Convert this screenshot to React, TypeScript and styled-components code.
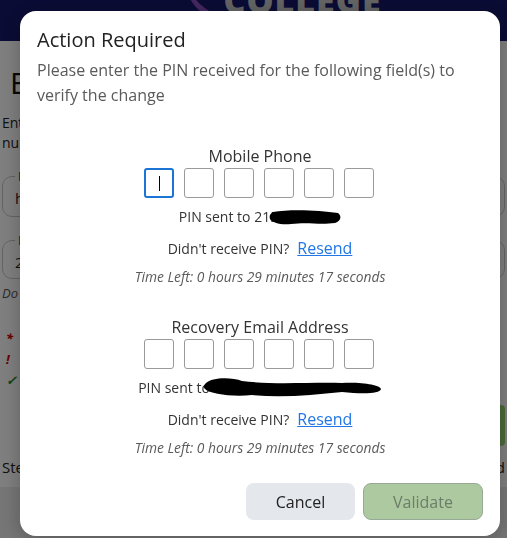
import React from "react";
import styled, { createGlobalStyle } from "styled-components";

const Global = createGlobalStyle`
  * { box-sizing: border-box; }
  html, body { margin: 0; padding: 0; background: #ffffff; }
  body { font-family: "Open Sans", "Noto Sans", Arial, sans-serif; overflow: hidden; }
`;

/* ---------- page behind the dialog ---------- */
const Page = styled.div`
  width: 507px;
  height: 538px;
  display: flex;
  flex-direction: column;
  background: #ffffff;
  overflow: hidden;
`;

const Header = styled.header`
  height: 41px;
  flex: none;
  background: #16186a;
  display: flex;
  justify-content: center;
  align-items: flex-start;
  overflow: hidden;
`;

const Logo = styled.div`
  display: flex;
  align-items: flex-end;
  gap: 8px;
  margin-top: -17px;
  margin-left: 60px;
`;

const LogoText = styled.span`
  font-family: "Open Sans", Arial, sans-serif;
  font-weight: 800;
  font-size: 34px;
  line-height: 34px;
  letter-spacing: 1px;
  color: #c8c8c8;
`;

const Main = styled.main`
  flex: 1;
  display: flex;
  flex-direction: column;
  padding: 0 2px;
  color: #222;
`;

const PageTitle = styled.h1`
  margin: 22px 0 0 8px;
  font-weight: 400;
  font-size: 30px;
  line-height: 40px;
  white-space: nowrap;
  color: #111;
`;

const Intro = styled.p`
  margin: 10px 0 0;
  font-size: 14px;
  line-height: 20px;
  color: #222;
`;

const Field = styled.fieldset<{ h: number }>`
  margin: 14px 0 0;
  padding: 0 12px 8px;
  border: 1px solid #c8c8c8;
  border-radius: 10px;
  height: ${(p) => p.h}px;
  legend { font-size: 13px; padding: 0 3px; color: #333; }
`;

const FieldValue = styled.div`
  font-size: 15px;
  line-height: 22px;
  color: #222;
  margin-top: 2px;
`;

const Hint = styled.div`
  font-size: 13px;
  font-style: italic;
  color: #555;
  margin-top: 5px;
`;

const LegendList = styled.ul`
  list-style: none;
  margin: 26px 0 0;
  padding: 0 0 0 4px;
  font-size: 13px;
  font-style: italic;
  line-height: 21px;
  color: #555;
`;

const Mark = styled.span<{ c: string }>`
  color: ${(p) => p.c};
  font-weight: 700;
  margin-right: 8px;
  display: inline-block;
  width: 12px;
`;

const ActionRow = styled.div`
  display: flex;
  justify-content: flex-end;
  margin-top: 14px;
`;

const NextButton = styled.div`
  width: 120px;
  height: 41px;
  border-radius: 4px;
  background: #94d476;
`;

const StepRow = styled.div`
  display: flex;
  justify-content: space-between;
  font-size: 15px;
  line-height: 22px;
  margin-top: 10px;
`;

const Footer = styled.footer`
  height: 51px;
  flex: none;
  background: #ececec;
`;

/* ---------- dialog ---------- */
const Overlay = styled.div`
  position: fixed;
  inset: 0;
  background: rgba(0, 0, 0, 0.5);
`;

const Dialog = styled.div`
  position: fixed;
  top: 11px;
  left: 20px;
  width: 480px;
  height: 525px;
  background: #ffffff;
  border-radius: 16px;
  padding: 14px 17px 16px;
  display: flex;
  flex-direction: column;
  box-shadow: 0 4px 20px rgba(0, 0, 0, 0.25);
`;

const Title = styled.h2`
  margin: 0;
  font-weight: 400;
  font-size: 20px;
  line-height: 30px;
  color: #222;
`;

const Description = styled.p`
  margin: 3px 0 0;
  font-size: 16px;
  line-height: 25px;
  color: #5a5a5a;
`;

const Section = styled.section<{ first?: boolean }>`
  margin-top: ${(p) => (p.first ? 37 : 30)}px;
  display: flex;
  flex-direction: column;
  align-items: center;
`;

const FieldName = styled.div`
  font-size: 16px;
  line-height: 22px;
  color: #333;
`;

const PinRow = styled.div`
  margin-top: 1px;
  margin-left: -2px;
  display: flex;
  gap: 10px;
`;

const PinBox = styled.div<{ focused?: boolean }>`
  width: 30px;
  height: 30px;
  border-radius: 3px;
  border: ${(p) => (p.focused ? "2px solid #1c74d4" : "1px solid #9a9a9a")};
  display: flex;
  align-items: center;
  justify-content: center;
`;

const Caret = styled.span`
  width: 1px;
  height: 15px;
  background: #000;
`;

const SentLine = styled.div`
  margin-top: 9px;
  height: 20px;
  display: flex;
  align-items: center;
  font-size: 14px;
  line-height: 20px;
  color: #333;
  svg { display: block; flex: none; }
`;

const ResendLine = styled.div`
  margin-top: 10px;
  font-size: 14px;
  line-height: 22px;
  color: #333;
`;

const ResendLink = styled.a`
  margin-left: 8px;
  font-size: 16px;
  color: #2277e6;
  text-decoration: underline;
  cursor: pointer;
`;

const TimeLeft = styled.div`
  margin-top: 8px;
  font-size: 13.8px;
  line-height: 18px;
  font-style: italic;
  color: #5a5a5a;
`;

const Buttons = styled.div`
  margin-top: auto;
  display: flex;
  justify-content: flex-end;
  gap: 8px;
`;

const Button = styled.button<{ variant: "cancel" | "validate" }>`
  height: 37px;
  width: ${(p) => (p.variant === "cancel" ? 109 : 120)}px;
  border-radius: 8px;
  font-family: "Open Sans", Arial, sans-serif;
  font-size: 16px;
  cursor: pointer;
  background: ${(p) => (p.variant === "cancel" ? "#e4e7eb" : "#adc99f")};
  border: ${(p) => (p.variant === "cancel" ? "none" : "1px solid #98a897")};
  color: ${(p) => (p.variant === "cancel" ? "#222" : "#6c7d6a")};
`;

const Redaction = ({ w, h, d, ml }: { w: number; h: number; d: string; ml: number }) => (
  <svg width={w} height={h} viewBox={`0 0 ${w} ${h}`} style={{ marginLeft: ml }}>
    <path d={d} fill="#000" />
  </svg>
);

const PinSection = ({
  name,
  first,
  sent,
}: {
  name: string;
  first?: boolean;
  sent: React.ReactNode;
}) => (
  <Section first={first}>
    <FieldName>{name}</FieldName>
    <PinRow>
      {Array.from({ length: 6 }).map((_, i) => (
        <PinBox key={i} focused={first && i === 0}>
          {first && i === 0 ? <Caret /> : null}
        </PinBox>
      ))}
    </PinRow>
    <SentLine>{sent}</SentLine>
    <ResendLine>
      Didn't receive PIN?<ResendLink>Resend</ResendLink>
    </ResendLine>
    <TimeLeft>Time Left: 0 hours 29 minutes 17 seconds</TimeLeft>
  </Section>
);

export default function App() {
  return (
    <>
      <Global />
      <Page>
        <Header>
          <Logo>
            <svg width="30" height="34" viewBox="0 0 30 34">
              <path d="M2 0 C6 14, 16 24, 28 30 L24 34 C12 28, 2 16, 0 0 Z" fill="#8a4fc0" />
            </svg>
            <LogoText>COLLEGE</LogoText>
          </Logo>
        </Header>
        <Main>
          <PageTitle>Edit Contact Information</PageTitle>
          <Intro>
            Enter your new contact details below and confirm your phone
            <br />
            number and recovery email address
          </Intro>
          <Field h={50}>
            <legend>Personal Email</legend>
            <FieldValue>hidden@example.edu</FieldValue>
          </Field>
          <Field h={48}>
            <legend>Mobile Phone</legend>
            <FieldValue>215 000 0000</FieldValue>
          </Field>
          <Hint>Do not include country code</Hint>
          <LegendList>
            <li>
              <Mark c="#c00">*</Mark>Required field
            </li>
            <li>
              <Mark c="#c00">!</Mark>Verification needed
            </li>
            <li>
              <Mark c="#2a8a2a">✓</Mark>Verified
            </li>
          </LegendList>
          <ActionRow>
            <NextButton />
          </ActionRow>
          <StepRow>
            <span>Step 2 of 3</span>
            <span>Saved</span>
          </StepRow>
        </Main>
        <Footer />
      </Page>
      <Overlay />
      <Dialog role="dialog" aria-modal="true">
        <Title>Action Required</Title>
        <Description>
          Please enter the PIN received for the following field(s) to verify the change
        </Description>
        <PinSection
          name="Mobile Phone"
          first
          sent={
            <>
              <span>PIN sent to 215</span>
              <Redaction
                w={72}
                h={16}
                ml={-9}
                d="M4 3 C20 0, 50 1, 69 4 C73 7, 72 12, 66 14 C50 16, 40 13, 22 15 C12 16, 3 14, 1 10 C0 7, 1 5, 4 3 Z"
              />
            </>
          }
        />
        <PinSection
          name="Recovery Email Address"
          sent={
            <>
              <span>PIN sent to</span>
              <Redaction
                w={180}
                h={22}
                ml={-8}
                d="M4 6 C10 0, 30 0, 40 4 C70 8, 110 5, 140 6 C160 5, 178 8, 179 12 C178 17, 160 17, 140 15 C110 18, 80 21, 50 18 C30 20, 8 17, 3 12 C1 10, 2 8, 4 6 Z"
              />
            </>
          }
        />
        <Buttons>
          <Button variant="cancel">Cancel</Button>
          <Button variant="validate">Validate</Button>
        </Buttons>
      </Dialog>
    </>
  );
}
